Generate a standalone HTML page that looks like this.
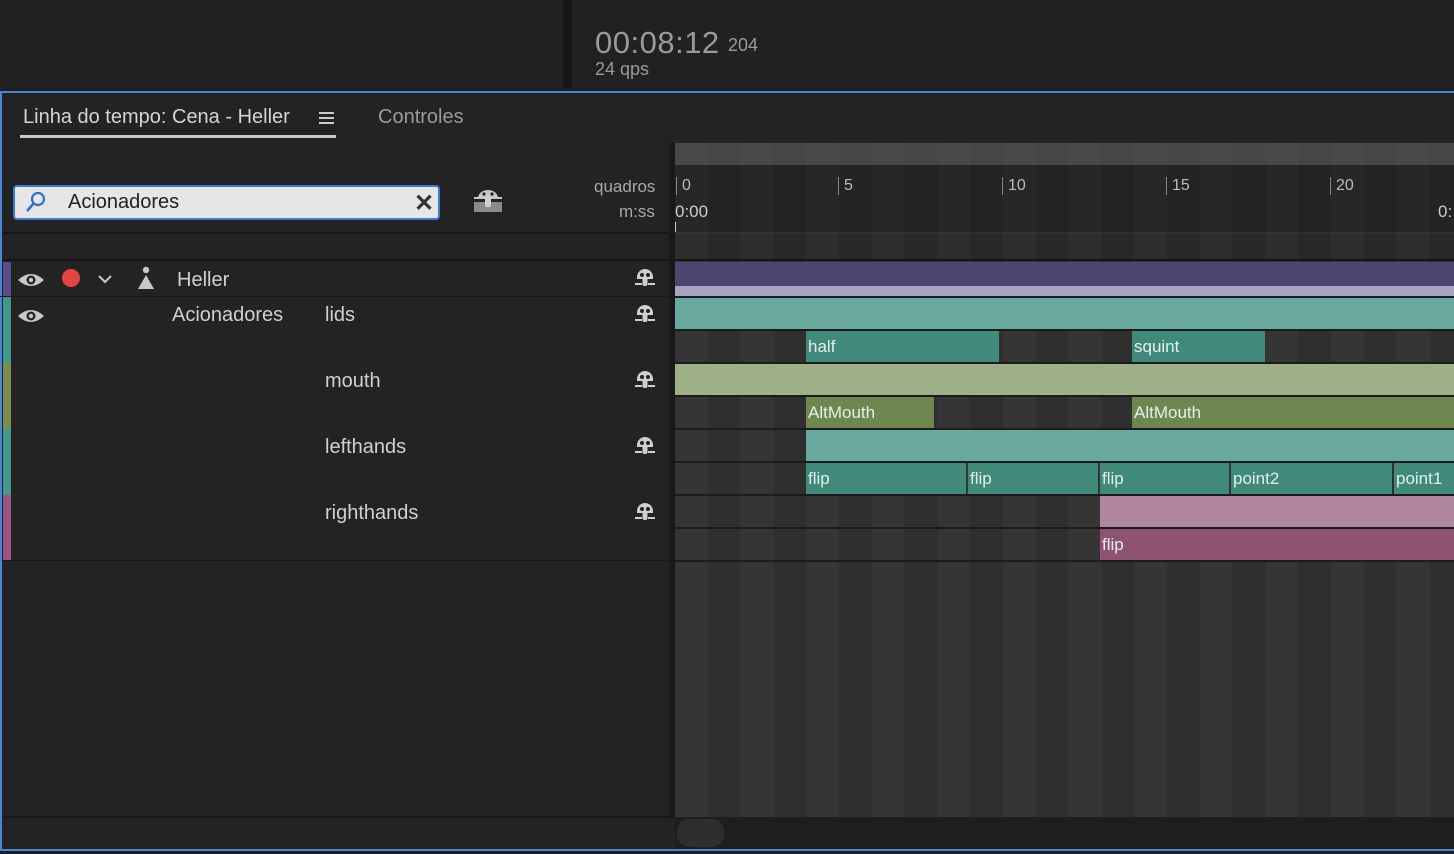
<!DOCTYPE html>
<html><head><meta charset="utf-8"><style>
*{margin:0;padding:0;box-sizing:border-box}
body{width:1454px;height:854px;background:#1e1e1e;position:relative;overflow:hidden;font-family:"Liberation Sans",sans-serif;color:#c8c8c8}
.a{position:absolute}
.stripes{background:repeating-linear-gradient(90deg,#353535 0,#353535 32.8px,#2f2f2f 32.8px,#2f2f2f 65.6px)}
.bar{position:absolute;color:#e6eee8;font-size:17px;line-height:32px;padding-left:2px;white-space:nowrap;overflow:hidden}
.lbl{position:absolute;font-size:20px;color:#d0d0d0}
.rowline{position:absolute;left:0;width:669px;height:1px;background:#181818}
.tl{position:absolute;left:675px;width:779px;height:2px;background:#1b1b1b}
</style></head><body>
<div class="a" style="left:0;top:0;width:563px;height:88px;background:#212121"></div>
<div class="a" style="left:563px;top:0;width:9px;height:88px;background:#161616"></div>
<div class="a" style="left:572px;top:0;width:882px;height:88px;background:#212121"></div>
<div class="a" style="left:595px;top:25px;font-size:31px;color:#9a9a9a;letter-spacing:0.5px">00:08:12</div>
<div class="a" style="left:728px;top:35px;font-size:18px;color:#9a9a9a">204</div>
<div class="a" style="left:595px;top:59px;font-size:18px;color:#9a9a9a">24 qps</div>
<div class="a" style="left:0;top:91px;width:1454px;height:760px;border:2px solid #4a86d8;border-right:none;background:#232323"></div>
<div class="a" style="left:23px;top:106px;font-size:20px;color:#d4d4d4">Linha do tempo: Cena - Heller</div>
<div class="a" style="left:319px;top:112px;width:15px;height:2px;background:#ccc;box-shadow:0 5px 0 #ccc,0 10px 0 #ccc"></div>
<div class="a" style="left:20px;top:135px;width:316px;height:3px;background:#c8c8c8"></div>
<div class="a" style="left:378px;top:106px;font-size:20px;color:#9a9a9a">Controles</div>
<div class="a" style="left:13px;top:185px;width:427px;height:35px;background:#e6e6e6;border:2px solid #3b7ad6;border-radius:4px"></div>
<svg class="a" style="left:24px;top:191px" width="24" height="22"><circle cx="14" cy="8" r="6" fill="none" stroke="#2f6fcf" stroke-width="2.2"/><line x1="10" y1="12" x2="3" y2="20" stroke="#2f6fcf" stroke-width="2.5"/></svg>
<div class="a" style="left:68px;top:191px;font-size:20px;color:#222">Acionadores</div>
<div class="a" style="left:414px;top:189px;font-size:24px;color:#333;font-weight:bold">✕</div>
<svg class="a" style="left:472px;top:188px" width="32" height="28"><path d="M6 10a10 8 0 0 1 20 0z" fill="#c8c8c8"/><rect x="2" y="9" width="28" height="2" fill="#c8c8c8"/><circle cx="12" cy="6" r="1.6" fill="#232323"/><circle cx="20" cy="6" r="1.6" fill="#232323"/><rect x="2" y="14" width="28" height="10" fill="#8a8a8a"/><rect x="13" y="9" width="6" height="10" rx="2" fill="#d0d0d0"/></svg>
<div class="a" style="left:594px;top:177px;font-size:17px;color:#a8a8a8">quadros</div>
<div class="a" style="left:619px;top:202px;font-size:17px;color:#a8a8a8">m:ss</div>
<div class="a" style="left:2px;top:232px;width:1452px;height:2px;background:#161616"></div>
<div class="a" style="left:2px;top:259px;width:667px;height:2px;background:#161616"></div>
<div class="a stripes" style="left:675px;top:143px;width:779px;height:674px"></div>
<div class="a" style="left:675px;top:143px;width:779px;height:22px;background:rgba(90,90,90,0.55)"></div>
<div class="a" style="left:675px;top:165px;width:779px;height:67px;background:rgba(0,0,0,0.25)"></div>
<div class="a" style="left:675px;top:234px;width:779px;height:26px;background:rgba(0,0,0,0.15)"></div>
<div class="a" style="left:675px;top:259px;width:779px;height:2px;background:#161616"></div>
<div class="a" style="left:669px;top:143px;width:6px;height:675px;background:#191919"></div>
<div class="a" style="left:676px;top:177px;font-size:16px;color:#bbb;border-left:1px solid #888;padding-left:5px;line-height:18px">0</div>
<div class="a" style="left:838px;top:177px;font-size:16px;color:#bbb;border-left:1px solid #888;padding-left:5px;line-height:18px">5</div>
<div class="a" style="left:1002px;top:177px;font-size:16px;color:#bbb;border-left:1px solid #888;padding-left:5px;line-height:18px">10</div>
<div class="a" style="left:1166px;top:177px;font-size:16px;color:#bbb;border-left:1px solid #888;padding-left:5px;line-height:18px">15</div>
<div class="a" style="left:1330px;top:177px;font-size:16px;color:#bbb;border-left:1px solid #888;padding-left:5px;line-height:18px">20</div>
<div class="a" style="left:675px;top:202px;font-size:17px;color:#ccc">0:00</div>
<div class="a" style="left:1438px;top:202px;font-size:17px;color:#ccc">0:</div>
<div class="a" style="left:675px;top:222px;width:1px;height:10px;background:#ccc"></div>
<div class="a" style="left:3px;top:262px;width:8px;height:34px;background:#5a4f8c"></div>
<div class="a" style="left:3px;top:297px;width:8px;height:66px;background:#3f9a8c"></div>
<div class="a" style="left:3px;top:363px;width:8px;height:66px;background:#7d8c4f"></div>
<div class="a" style="left:3px;top:429px;width:8px;height:66px;background:#3f9a8c"></div>
<div class="a" style="left:3px;top:495px;width:8px;height:66px;background:#9a5680"></div>
<div class="rowline" style="top:296px"></div>
<div class="rowline" style="top:560px;left:2px"></div>
<div class="a" style="left:2px;top:816px;width:667px;height:2px;background:#181818"></div>
<div class="a" style="left:675px;top:817px;width:779px;height:32px;background:#1e1e1e"></div>
<div class="a" style="left:677px;top:819px;width:47px;height:28px;border-radius:12px;background:#2e2e2e"></div>
<svg class="a" style="left:17px;top:271px" width="28" height="18"><path d="M1 9Q14 -3 27 9Q14 21 1 9z" fill="#c8c8c8"/><circle cx="14" cy="9" r="4.5" fill="#232323"/><circle cx="14" cy="9" r="2.2" fill="#c8c8c8"/></svg>
<svg class="a" style="left:17px;top:307px" width="28" height="18"><path d="M1 9Q14 -3 27 9Q14 21 1 9z" fill="#c8c8c8"/><circle cx="14" cy="9" r="4.5" fill="#232323"/><circle cx="14" cy="9" r="2.2" fill="#c8c8c8"/></svg>
<div class="a" style="left:62px;top:269px;width:18px;height:18px;border-radius:50%;background:#e5453f"></div>
<svg class="a" style="left:97px;top:274px" width="16" height="10"><path d="M2 2l6 6 6-6" fill="none" stroke="#c8c8c8" stroke-width="2"/></svg>
<svg class="a" style="left:137px;top:266px" width="18" height="24"><circle cx="9" cy="4" r="3.2" fill="#c8c8c8"/><path d="M9 9L1 23H17z" fill="#c8c8c8"/></svg>
<div class="lbl" style="left:177px;top:269px">Heller</div>
<div class="lbl" style="left:172px;top:304px">Acionadores</div>
<div class="lbl" style="left:325px;top:304px">lids</div>
<div class="lbl" style="left:325px;top:370px">mouth</div>
<div class="lbl" style="left:325px;top:436px">lefthands</div>
<div class="lbl" style="left:325px;top:502px">righthands</div>
<svg class="a" style="left:633px;top:267px" width="24" height="22"><path d="M4 12V10a8 8 0 0 1 16 0v2z" fill="#cfcfcf"/><circle cx="9" cy="8" r="2" fill="#232323"/><circle cx="15" cy="8" r="2" fill="#232323"/><rect x="9.5" y="10" width="5" height="9" rx="2" fill="#cfcfcf"/><rect x="2" y="16" width="7" height="2" fill="#cfcfcf"/><rect x="15" y="16" width="7" height="2" fill="#cfcfcf"/></svg>
<svg class="a" style="left:633px;top:303px" width="24" height="22"><path d="M4 12V10a8 8 0 0 1 16 0v2z" fill="#cfcfcf"/><circle cx="9" cy="8" r="2" fill="#232323"/><circle cx="15" cy="8" r="2" fill="#232323"/><rect x="9.5" y="10" width="5" height="9" rx="2" fill="#cfcfcf"/><rect x="2" y="16" width="7" height="2" fill="#cfcfcf"/><rect x="15" y="16" width="7" height="2" fill="#cfcfcf"/></svg>
<svg class="a" style="left:633px;top:369px" width="24" height="22"><path d="M4 12V10a8 8 0 0 1 16 0v2z" fill="#cfcfcf"/><circle cx="9" cy="8" r="2" fill="#232323"/><circle cx="15" cy="8" r="2" fill="#232323"/><rect x="9.5" y="10" width="5" height="9" rx="2" fill="#cfcfcf"/><rect x="2" y="16" width="7" height="2" fill="#cfcfcf"/><rect x="15" y="16" width="7" height="2" fill="#cfcfcf"/></svg>
<svg class="a" style="left:633px;top:435px" width="24" height="22"><path d="M4 12V10a8 8 0 0 1 16 0v2z" fill="#cfcfcf"/><circle cx="9" cy="8" r="2" fill="#232323"/><circle cx="15" cy="8" r="2" fill="#232323"/><rect x="9.5" y="10" width="5" height="9" rx="2" fill="#cfcfcf"/><rect x="2" y="16" width="7" height="2" fill="#cfcfcf"/><rect x="15" y="16" width="7" height="2" fill="#cfcfcf"/></svg>
<svg class="a" style="left:633px;top:501px" width="24" height="22"><path d="M4 12V10a8 8 0 0 1 16 0v2z" fill="#cfcfcf"/><circle cx="9" cy="8" r="2" fill="#232323"/><circle cx="15" cy="8" r="2" fill="#232323"/><rect x="9.5" y="10" width="5" height="9" rx="2" fill="#cfcfcf"/><rect x="2" y="16" width="7" height="2" fill="#cfcfcf"/><rect x="15" y="16" width="7" height="2" fill="#cfcfcf"/></svg>
<div class="tl" style="top:296px"></div>
<div class="tl" style="top:329px"></div>
<div class="tl" style="top:362px"></div>
<div class="tl" style="top:395px"></div>
<div class="tl" style="top:428px"></div>
<div class="tl" style="top:461px"></div>
<div class="tl" style="top:494px"></div>
<div class="tl" style="top:527px"></div>
<div class="tl" style="top:560px"></div>
<div class="bar" style="left:675px;top:262px;width:779px;height:24px;background:#4d4670"></div>
<div class="bar" style="left:675px;top:286px;width:779px;height:10px;background:#a8a3bf"></div>
<div class="bar" style="left:675px;top:298px;width:779px;height:31px;background:#6aaa9e"></div>
<div class="bar" style="left:806px;top:331px;width:193px;height:31px;background:#3f8a7b">half</div>
<div class="bar" style="left:1132px;top:331px;width:133px;height:31px;background:#3f8a7b">squint</div>
<div class="bar" style="left:675px;top:364px;width:779px;height:31px;background:#9db088"></div>
<div class="bar" style="left:806px;top:397px;width:128px;height:31px;background:#6e8750">AltMouth</div>
<div class="bar" style="left:1132px;top:397px;width:322px;height:31px;background:#6e8750">AltMouth</div>
<div class="bar" style="left:806px;top:430px;width:648px;height:31px;background:#6aaa9e"></div>
<div class="bar" style="left:806px;top:463px;width:160px;height:31px;background:#3f8a7b">flip</div>
<div class="bar" style="left:968px;top:463px;width:130px;height:31px;background:#3f8a7b">flip</div>
<div class="bar" style="left:1100px;top:463px;width:129px;height:31px;background:#3f8a7b">flip</div>
<div class="bar" style="left:1231px;top:463px;width:161px;height:31px;background:#3f8a7b">point2</div>
<div class="bar" style="left:1394px;top:463px;width:60px;height:31px;background:#3f8a7b">point1</div>
<div class="bar" style="left:1100px;top:496px;width:354px;height:31px;background:#b0869e"></div>
<div class="bar" style="left:1100px;top:529px;width:354px;height:31px;background:#8e5272">flip</div>
</body></html>
